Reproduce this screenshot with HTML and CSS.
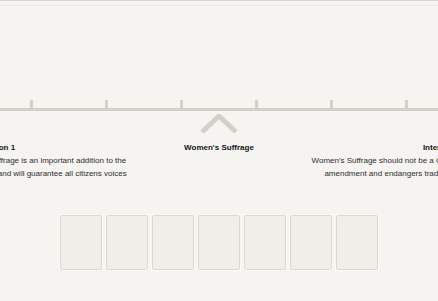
FILE: index.html
```html
<!DOCTYPE html>
<html lang="en">
<head>
<meta charset="UTF-8" />
<meta name="viewport" content="width=device-width, initial-scale=1" />
<title>Timeline</title>
<link rel="stylesheet" href="styles.css">
</head>
<body>

<div class="page">
  <div class="topbar"></div>

  <!-- tidslinje -->
  <div class="timeline">
    <div class="ticks">
      <span></span><span></span><span></span><span></span><span></span><span></span>
    </div>
    <div class="axis"></div>
    <svg class="marker" width="38" height="19" viewBox="0 0 38 19">
      <polyline points="2,18 19,2 36,18" fill="none" stroke="#d4d0c9" stroke-width="5" />
    </svg>
  </div>

  <div class="labels">
    <div class="label">Interpretation 1</div>
    <div class="label">Women's Suffrage</div>
    <div class="label">Interpretation 2</div>
  </div>

  <div class="notes">
    <p>Women's Suffrage is an important addition to the<br>Constitution and will guarantee all citizens voices</p>
    <p>Women's Suffrage should not be a Constitutional<br>amendment and endangers traditional life</p>
  </div>

  <!-- kort -->
  <div class="cards">
    <div class="card"></div>
    <div class="card"></div>
    <div class="card"></div>
    <div class="card"></div>
    <div class="card"></div>
    <div class="card"></div>
    <div class="card"></div>
  </div>
</div>

</body>
</html>
```

FILE: styles.css
```css
body {
  font-family: 'Liberation Sans', Arial, Helvetica, sans-serif;
  background: #f5f4f1;
  margin: 0;
  color: #1c1c1c;
  overflow: hidden;
}
.page {
  height: 300px;
  border-top: 1px solid #d9d7d3;
  overflow: hidden;
}
.topbar {
  height: 4px;
  border-bottom: 1px solid #eeece8;
}
.timeline {
  padding-top: 94px;
  display: flex;
  flex-direction: column;
  align-items: center;
}
.ticks {
  display: flex;
  justify-content: center;
  gap: 72px;
  width: 100%;
}
.ticks span {
  width: 3px;
  height: 8px;
  background: #d4d0c9;
}
.axis {
  width: 100%;
  height: 3px;
  background: #d4d0c9;
}
.marker {
  display: block;
  margin-top: 3px;
}
.labels {
  display: flex;
  justify-content: center;
  margin-top: 10px;
}
.label {
  flex: 0 0 233px;
  text-align: center;
  font-size: 8px;
  line-height: 10px;
  font-weight: 700;
  color: #161616;
}
.notes {
  display: flex;
  justify-content: center;
  margin-top: 1px;
}
.notes p {
  flex: 0 0 358px;
  margin: 0;
  text-align: center;
  font-size: 8px;
  line-height: 13px;
  color: #2e2e2e;
}
.cards {
  display: flex;
  justify-content: center;
  gap: 4px;
  margin-top: 35px;
}
.card {
  width: 40px;
  height: 53px;
  background: #efeee9;
  border: 1px solid #dcd9d2;
  border-radius: 2px;
  box-shadow: 0 0 0 1px #f9f8f6;
}
```
